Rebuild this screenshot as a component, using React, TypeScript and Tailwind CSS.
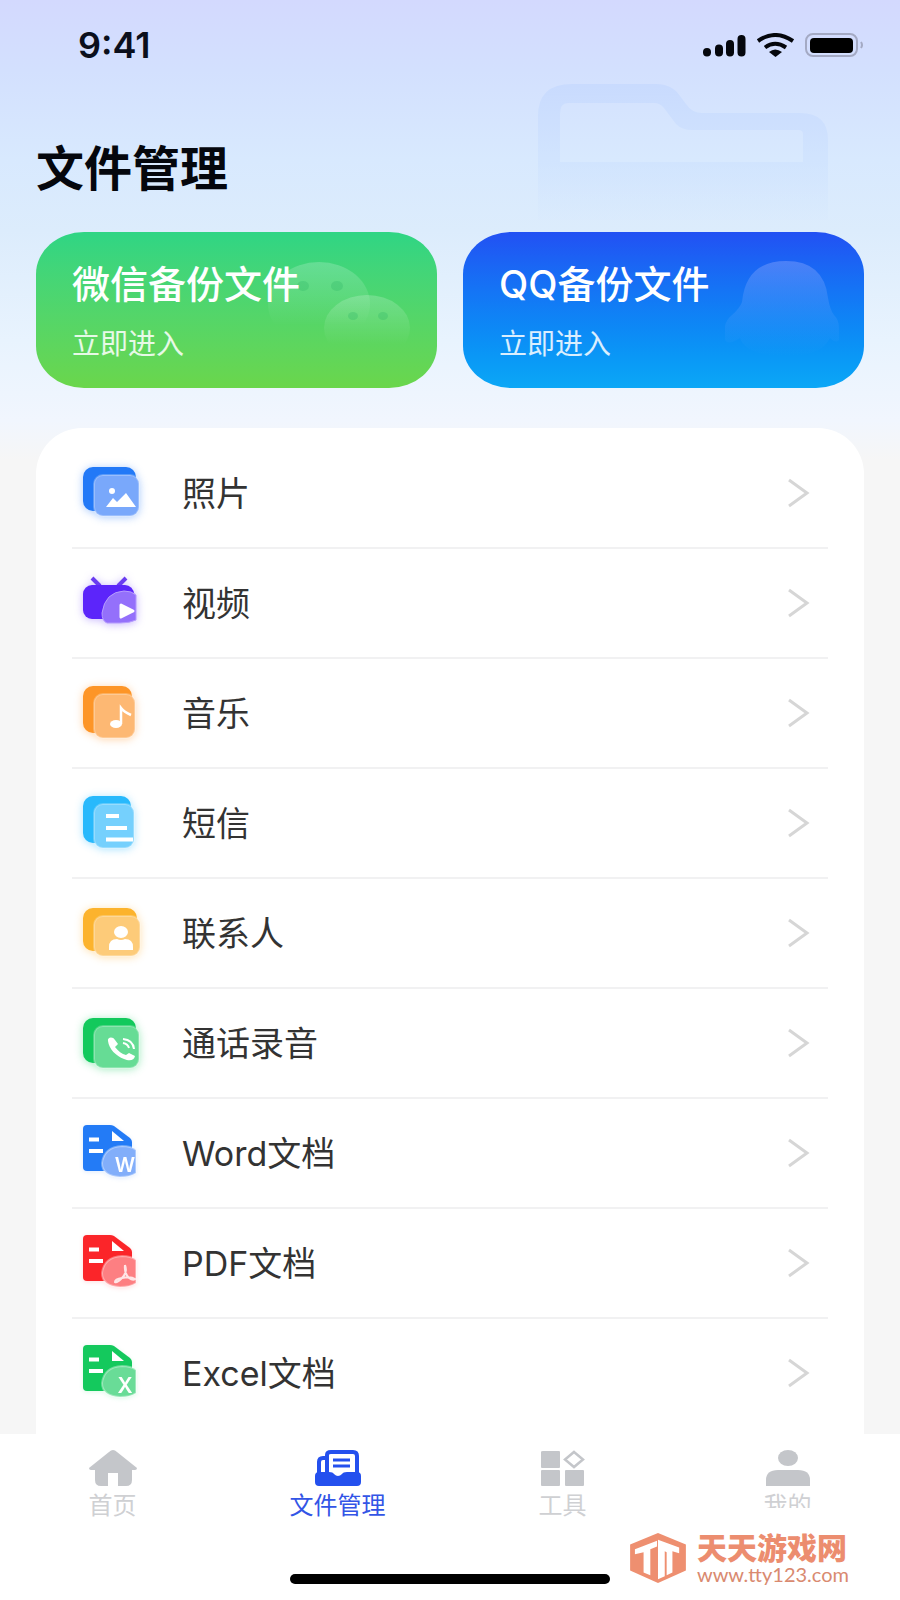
import React, { JSX, ReactNode } from 'react';

type FileRow = {
    label: string;
    icon: ReactNode;
    glow: string;
};

// Two stacked rounded sheets, the front one translucent
const Stack = ({ color, front, w, top, bottom, children }: {
    color: string; front: string; w: number; top: number; bottom: number; children: ReactNode;
}): JSX.Element => (
    <>
        <rect x="11" y={top} width={w} height={bottom - top - 3} rx="10" fill={color} />
        <rect x="22" y={top + 8} width={w - 8} height={bottom - top - 6} rx="9" fill={front} stroke="#ffffff" strokeOpacity="0.25" strokeWidth="2" />
        {children}
    </>
);

// Document page with a folded corner and a round badge
const Doc = ({ color, badge, children }: { color: string; badge: string; children: ReactNode }): JSX.Element => (
    <>
        <path d="M15 4H38Q40 4 42 5L58 17Q60 19 60 21V50H15Q11 50 11 46V8Q11 4 15 4Z" fill={color} />
        <path d="M40 10V20H52Z" fill="#fff" />
        <path d="M17 18.500H27M17 30H31" stroke="#fff" strokeWidth="4" />
        <path d="M64 29V52Q58 56 48 56Q30 55 30 42Q32 26 50 25Q59 25 64 29Z" fill={badge} stroke="#ffffff" strokeOpacity="0.35" strokeWidth="2" />
        {children}
    </>
);

const rows: FileRow[] = [
    {
        label: '照片',
        glow: 'drop-shadow-[0_1px_4px_rgba(35,120,248,0.4)]',
        icon: (
            <Stack color="#2279f7" front="#79a8fb" w={53} top={6} bottom={53}>
                <circle cx="40" cy="30" r="3" fill="#fff" />
                <path d="M34 46L41 37L45 41L54 32L64 46Z" fill="#fff" />
            </Stack>
        ),
    },
    {
        label: '视频',
        glow: 'drop-shadow-[0_1px_4px_rgba(96,50,250,0.35)]',
        icon: (
            <>
                <path d="M20 7L28 15M54 7L46 15" stroke="#6a3cf0" strokeWidth="4" />
                <rect x="11" y="14" width="51" height="34" rx="9" fill="#5c25fa" />
                <path d="M64 24V49Q58 52 48 52H35Q30 50 30 42Q33 21 52 20Q60 20 64 24Z" fill="#9470fb" stroke="#b69dfd" strokeWidth="1" />
                <path d="M49 34L61 40L49 46Z" fill="#fff" stroke="#fff" strokeWidth="3" strokeLinejoin="round" />
            </>
        ),
    },
    {
        label: '音乐',
        glow: 'drop-shadow-[0_1px_4px_rgba(255,145,40,0.4)]',
        icon: (
            <Stack color="#fd9527" front="#fdb873" w={49} top={5} bottom={55}>
                <ellipse cx="44" cy="43" rx="6" ry="4" fill="#fff" />
                <path d="M49 43V27Q52 31 59 34" fill="none" stroke="#fff" strokeWidth="2.500" />
            </Stack>
        ),
    },
    {
        label: '短信',
        glow: 'drop-shadow-[0_1px_4px_rgba(40,185,255,0.4)]',
        icon: (
            <Stack color="#28b9fc" front="#75d0fd" w={48} top={5} bottom={55}>
                <path d="M34 25H47M34 37H55M34 48.500H61" stroke="#fff" strokeWidth="4" />
            </Stack>
        ),
    },
    {
        label: '联系人',
        glow: 'drop-shadow-[0_1px_4px_rgba(255,178,50,0.4)]',
        icon: (
            <Stack color="#fcb32d" front="#fdcb79" w={54} top={7} bottom={53}>
                <ellipse cx="49" cy="31" rx="7" ry="6" fill="#fff" />
                <path d="M37 49V46Q37 38 45 38Q49 40 53 38Q61 38 61 46V49Z" fill="#fff" />
            </Stack>
        ),
    },
    {
        label: '通话录音',
        glow: 'drop-shadow-[0_1px_4px_rgba(20,205,95,0.4)]',
        icon: (
            <Stack color="#12c95c" front="#66dc95" w={53} top={7} bottom={55}>
                <path d="M36 30C35 26 41 25 43 29L46 33L43 36C46 40 50 43 54 44L57 42L63 45C62 50 57 50 52 48C44 45 37 38 36 30Z" fill="#fff" />
                <path d="M51 32Q56 33 57 37M51 28Q61 29 62 38" fill="none" stroke="#fff" strokeWidth="2" />
            </Stack>
        ),
    },
    {
        label: 'Word文档',
        glow: 'drop-shadow-[0_1px_2px_rgba(35,120,248,0.15)]',
        icon: (
            <Doc color="#237bf6" badge="#82aefa">
                <text x="53" y="51" textAnchor="middle" fontFamily="Inter, sans-serif" fontSize="20" fontWeight="600" fill="#fff">W</text>
            </Doc>
        ),
    },
    {
        label: 'PDF文档',
        glow: 'drop-shadow-[0_1px_2px_rgba(255,35,40,0.15)]',
        icon: (
            <Doc color="#fb2529" badge="#fd7f82">
                <path d="M53 34Q56 42 49 48Q45 52 43 51Q43 48 50 47Q59 45 63 48Q61 50 57 47Q52 42 53 34" fill="none" stroke="#fff" strokeOpacity="0.8" strokeWidth="2" />
            </Doc>
        ),
    },
    {
        label: 'Excel文档',
        glow: 'drop-shadow-[0_1px_2px_rgba(20,205,95,0.15)]',
        icon: (
            <Doc color="#14c95d" badge="#69dc97">
                <text x="53" y="52" textAnchor="middle" fontFamily="Inter, sans-serif" fontSize="21" fontWeight="600" fill="#fff">X</text>
            </Doc>
        ),
    },
];

const tabs = [
    {
        label: '首页',
        icon: <path d="M24 0Q26 0 28 2L48 18Q48 20 46 20H43V30Q43 36 37 36H29V23H19V36H12Q6 36 6 30V20H2Q0 20 0 18L20 2Q22 0 24 0Z" fill="#c4c6ca" />,
    },
    {
        label: '文件管理',
        active: true,
        icon: (
            <>
                <path d="M13 24V5Q13 2 17 2H39Q43 2 43 6V24M13 8H9Q5 8 5 12V24" fill="none" stroke="#2450ee" strokeWidth="4" />
                <path d="M19 10H36M19 16H36" stroke="#2450ee" strokeWidth="3" />
                <path d="M1 26Q1 22 5 22H15Q19 22 20 24Q24 28 28 24Q29 22 33 22H43Q47 22 47 26V32Q47 36 43 36H5Q1 36 1 32Z" fill="#2450ee" />
            </>
        ),
    },
    {
        label: '工具',
        icon: (
            <>
                <path d="M4 1H20Q21 1 21 2V17Q21 18 20 18H3Q2 18 2 17V2Q2 1 4 1ZM3 20H20Q21 20 21 21V35Q21 36 20 36H3Q2 36 2 35V21Q2 20 3 20ZM27 20H44Q45 20 45 21V35Q45 36 44 36H27Q26 36 26 35V21Q26 20 27 20Z" fill="#c4c6ca" />
                <path d="M35 2L44 9.500L35 17L26 9.500Z" fill="none" stroke="#c4c6ca" strokeWidth="2.500" />
            </>
        ),
    },
    {
        label: '我的',
        cut: true,
        icon: (
            <>
                <ellipse cx="24" cy="8" rx="10" ry="8" fill="#c4c6ca" />
                <path d="M2 36V30Q2 20 14 20H34Q46 20 46 30V36Z" fill="#c4c6ca" />
            </>
        ),
    },
];

const StatusBar = (): JSX.Element => (
    <div className="flex h-[90px] items-center justify-between pl-[42px]">
        <span className="text-[36px] leading-10 font-semibold text-[#0b0f1c]">9:41</span>
        <svg className="h-6 w-[162px]" viewBox="0 0 162 24" aria-hidden="true">
            <path d="M5 19.500V19M17 19.500V15.500M28 19.500V11M39.500 19.500V6" stroke="#05070d" strokeWidth="8" strokeLinecap="round" />
            <path d="M56 8Q73 -4 91 8M63 14.500Q73 7 84 14.500" fill="none" stroke="#05070d" strokeWidth="4" />
            <path d="M67 19Q73 14 80 19L73.500 24Z" fill="#05070d" />
            <rect x="104" y="1" width="51" height="22" rx="7" fill="none" stroke="#a4aac4" strokeWidth="2" />
            <rect x="108" y="5" width="43" height="15" rx="4" fill="#000" />
            <path d="M159 9Q161 12 159 15" fill="none" stroke="#a4aac4" strokeWidth="2" />
        </svg>
    </div>
);

const FolderMark = (): JSX.Element => (
    <svg className="absolute top-[84px] right-[72px] h-[136px] w-[290px]" viewBox="0 0 290 136" aria-hidden="true">
        <defs>
            <linearGradient id="folderFade" x1="0" y1="0" x2="0" y2="1">
                <stop offset="0" stopColor="#c6d9fe" stopOpacity="0.8" />
                <stop offset="0.6" stopColor="#cbe0fe" stopOpacity="0.5" />
                <stop offset="1" stopColor="#cfe3fe" stopOpacity="0.1" />
            </linearGradient>
        </defs>
        <path
            d="M0 136V32Q0 0 34 0H118Q134 0 142 12L148 20Q154 29 164 29H262Q290 29 290 56V136ZM22 78H265V50Q265 46 260 46H154Q144 46 138 40L126 24Q122 19 116 19H30Q22 19 22 30Z"
            fill="url(#folderFade)"
            fillRule="evenodd"
        />
    </svg>
);

const WechatMark = (): JSX.Element => (
    <svg className="absolute top-7 right-6 h-[100px] w-40" viewBox="0 0 160 100" aria-hidden="true">
        <defs>
            <linearGradient id="wxFade" x1="0" y1="0" x2="0" y2="1">
                <stop offset="0" stopColor="#fff" stopOpacity="0.2" />
                <stop offset="0.75" stopColor="#fff" stopOpacity="0" />
            </linearGradient>
        </defs>
        <ellipse cx="66" cy="44" rx="51" ry="42" fill="url(#wxFade)" />
        <ellipse cx="114" cy="68" rx="43" ry="33" fill="url(#wxFade)" />
        <g fill="#2fb566" fillOpacity="0.3">
            <ellipse cx="50" cy="26" rx="6" ry="5" />
            <ellipse cx="84" cy="26" rx="6" ry="5" />
            <ellipse cx="100" cy="56" rx="5" ry="4" />
            <ellipse cx="130" cy="56" rx="5" ry="4" />
        </g>
    </svg>
);

const QqMark = (): JSX.Element => (
    <svg className="absolute top-7 right-6 h-[100px] w-40" viewBox="0 0 160 100" aria-hidden="true">
        <defs>
            <linearGradient id="qqFade" x1="0" y1="0" x2="0" y2="1">
                <stop offset="0" stopColor="#a9b8ff" stopOpacity="0.34" />
                <stop offset="1" stopColor="#6fb0ff" stopOpacity="0" />
            </linearGradient>
        </defs>
        <path d="M45 80V66Q46 60 52 55Q60 48 62 42Q66 1 106 1Q144 1 148 38Q150 50 154 55Q159 60 159 68V80Q156 84 150 78Q142 96 106 96Q66 96 60 78Q48 86 45 80Z" fill="url(#qqFade)" />
    </svg>
);

const BackupCard = ({ title, tone, mark }: { title: string; tone: string; mark: ReactNode }): JSX.Element => (
    <a href="#" className={`relative flex h-39 flex-1 flex-col gap-5 rounded-[48px/42px] bg-linear-to-b pt-[30px] pl-9 text-white ${tone}`}>
        {mark}
        <span className="relative text-[38px] leading-11 font-medium">{title}</span>
        <span className="relative text-[28px] leading-9 text-white/85">立即进入</span>
    </a>
);

const SiteMark = (): JSX.Element => (
    <a href="#" className="absolute right-[51px] bottom-4 flex items-center gap-2.5">
        <svg className="h-[50px] w-[58px]" viewBox="0 0 58 52" aria-hidden="true">
            <path d="M29 0L58 12V39L29 52L0 39V12Z" fill="#ee8f70" />
            <path d="M5 17L28 8V14L21 17V44L14 41V20L5 22Z" fill="#fff" />
            <path d="M29 7L51 15V21L44 19V41L38 44V20L36 19V45L29 48Z" fill="#fff" />
        </svg>
        <span className="flex flex-col">
            <span className="text-[30px] leading-8 font-black text-[#ec8d6f]">天天游戏网</span>
            <span className="font-[Lato] text-[20px] leading-5 text-[#d98a70]">www.tty123.com</span>
        </span>
    </a>
);

const App = (): JSX.Element => {
    return (
        <div className="flex min-h-screen flex-col bg-[#f6f6f6] font-[Inter,'Noto_Sans_CJK_SC',sans-serif]">
            <div className="relative flex flex-1 flex-col bg-[linear-gradient(to_bottom,#d3d9fe_0px,#d3e0fe_70px,#d8e9fe_160px,#dcecfc_230px,#e8f3fe_340px,#f1f6fe_420px,#f6f6f6_460px)] px-9">
                <FolderMark />
                <StatusBar />
                <h1 className="relative mt-[51px] text-[48px] leading-14 font-bold text-[#05070d]">文件管理</h1>
                <div className="mt-[35px] flex gap-[26px]">
                    <BackupCard title="微信备份文件" tone="from-[#2ed584] to-[#6ad64b]" mark={<WechatMark />} />
                    <BackupCard title="QQ备份文件" tone="from-[#2250f3] to-[#0ca7f6]" mark={<QqMark />} />
                </div>
                <main className="mt-10 flex-1 rounded-t-[46px] bg-white px-9 pt-[11px]">
                    <ul>
                        {rows.map((row) => (
                            <li key={row.label} className="border-b-2 border-[#f1f1f2] last:border-b-0">
                                <a href="#" className="flex h-[108px] items-center">
                                    <svg className={`h-16 w-18 shrink-0 overflow-visible ${row.glow}`} viewBox="0 0 72 64" aria-hidden="true">
                                        {row.icon}
                                    </svg>
                                    <span className="ml-[38px] flex-1 pt-0.5 text-[34px] leading-10 text-[#333333]">{row.label}</span>
                                    <svg className="mr-4.5 h-8 w-6" viewBox="0 0 24 32" aria-hidden="true">
                                        <path d="M3 3L21 16L3 29" fill="none" stroke="#d6d6d6" strokeWidth="3" />
                                    </svg>
                                </a>
                            </li>
                        ))}
                    </ul>
                </main>
            </div>
            <footer className="relative bg-white pt-4 pb-4">
                <nav className="grid grid-cols-4">
                    {tabs.map((tab) => (
                        <a key={tab.label} href="#" className="flex flex-col items-center gap-1.5">
                            <svg className="h-9 w-12" viewBox="0 0 48 36" aria-hidden="true">
                                {tab.icon}
                            </svg>
                            <span className={`text-[24px] leading-7 ${tab.active ? 'text-[#3355e6]' : 'text-[#cfd0d3]'} ${tab.cut ? 'h-4 overflow-hidden' : ''}`}>
                                {tab.label}
                            </span>
                        </a>
                    ))}
                </nav>
                <div className="mx-auto mt-[54px] h-2.5 w-80 rounded-full bg-black" />
                <SiteMark />
            </footer>
        </div>
    );
};

export default App;
